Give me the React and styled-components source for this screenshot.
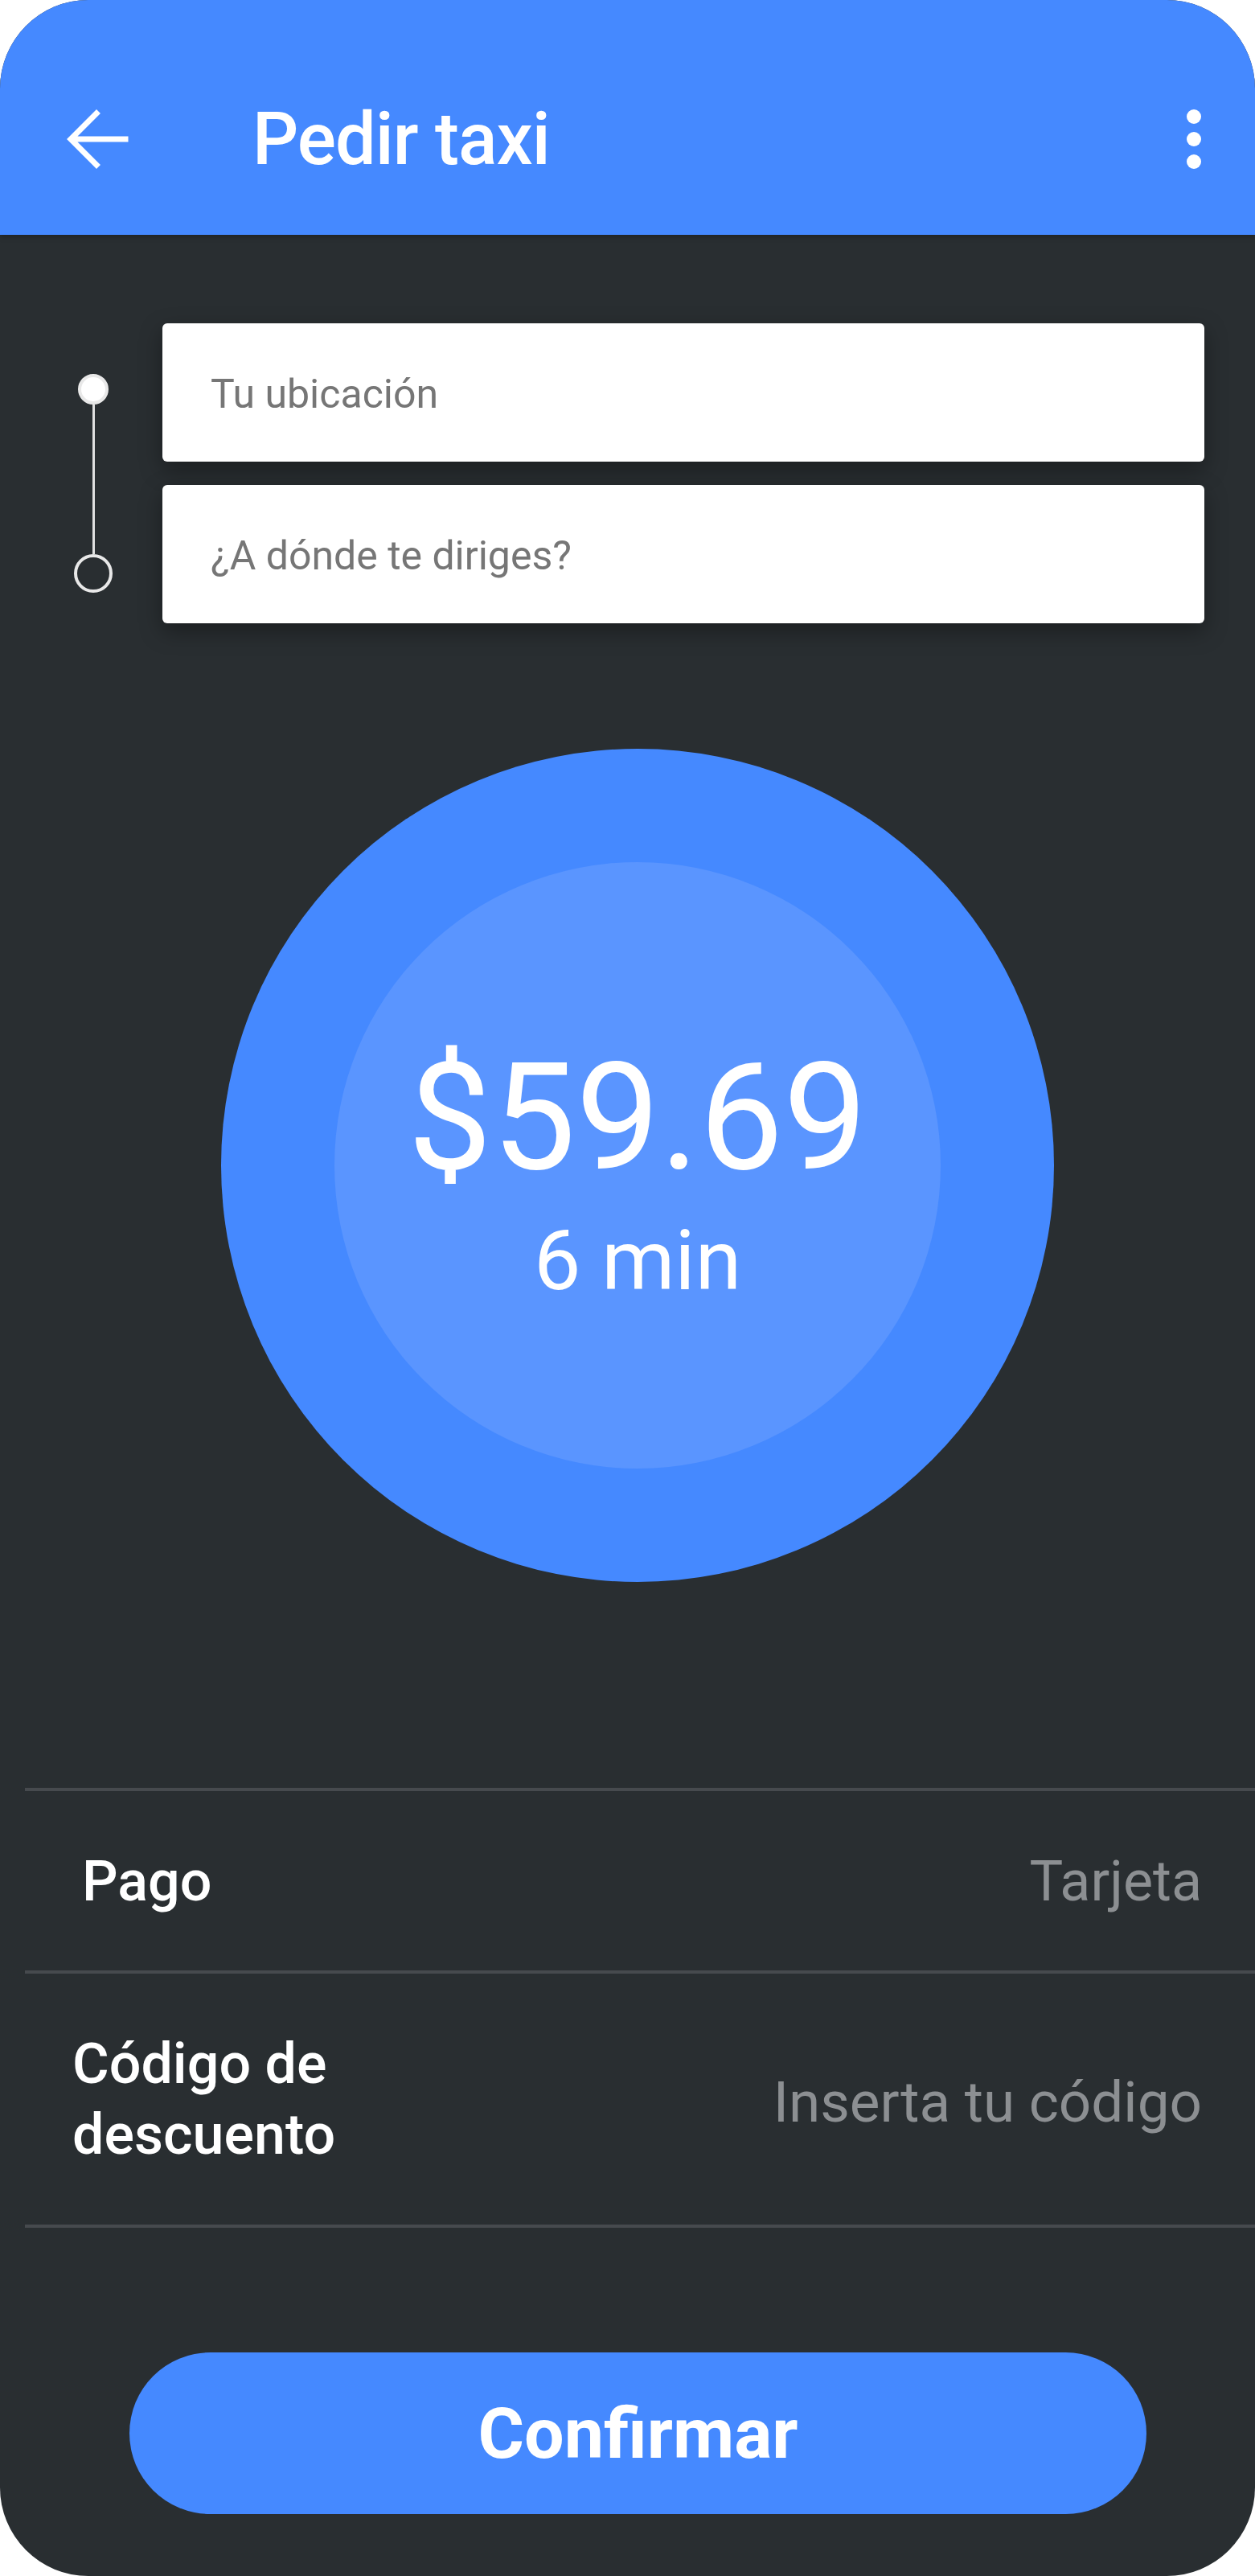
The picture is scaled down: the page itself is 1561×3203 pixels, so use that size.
import React from 'react'
import styled, { createGlobalStyle } from 'styled-components'

const Global = createGlobalStyle`
    html, body {
        margin: 0;
        padding: 0;
        background: #ffffff;
    }
    * {
        box-sizing: border-box;
    }
`;

const Phone = styled.div`
    width: 1561px;
    height: 3203px;
    display: flex;
    flex-direction: column;

    background-color: #292e31;
    border-radius: 110px;
    overflow: hidden;

    font-family: Roboto, "Liberation Sans", sans-serif;
`;

const Header = styled.header`
    height: 292px;
    flex-shrink: 0;
    display: flex;
    align-items: center;
    padding: 54px 66px 0 82px;

    background-color: #4589ff;
    box-shadow: 0 3px 6px rgba(0, 0, 0, 0.25);
`;

const Title = styled.h1`
    flex: 1;
    margin: 0 0 0 154px;

    color: #ffffff;
    font-size: 90px;
    font-weight: 500;
    letter-spacing: -1px;
`;

const Route = styled.div`
    display: flex;
    margin-top: 110px;
    padding-right: 63px;
`;

const Timeline = styled.div`
    width: 202px;
    flex-shrink: 0;
    display: flex;
    flex-direction: column;
    align-items: center;
    padding-top: 63px;
    padding-left: 30px;
`;

const Dot = styled.div`
    width: ${p => p.filled ? '38px' : '48px'};
    height: ${p => p.filled ? '38px' : '48px'};
    border-radius: 50%;
    flex-shrink: 0;
    border: 4px solid #e8e8e8;
    background-color: ${p => p.filled ? '#ffffff' : 'transparent'};
`;

const Stem = styled.div`
    width: 3px;
    height: 186px;
    background-color: #e0e0e0;
`;

const Fields = styled.div`
    flex: 1;
    display: flex;
    flex-direction: column;
    gap: 29px;
`;

const Field = styled.div`
    height: 172px;
    display: flex;
    align-items: center;
    padding: 4px 0 0 60px;

    background-color: #ffffff;
    border-radius: 6px;
    box-shadow: 0 10px 28px rgba(0, 0, 0, 0.35);

    color: #767676;
    font-size: 50px;
`;

const Estimate = styled.div`
    display: flex;
    justify-content: center;
    margin-top: 156px;
    padding-left: 25px;
`;

const Outer = styled.div`
    width: 1036px;
    height: 1036px;
    border-radius: 50%;
    display: flex;
    align-items: center;
    justify-content: center;
    background-color: #4589ff;
`;

const Inner = styled.div`
    width: 754px;
    height: 754px;
    border-radius: 50%;
    display: flex;
    flex-direction: column;
    align-items: center;
    justify-content: center;
    padding-top: 18px;

    background-color: #5a95ff;
    color: #ffffff;
`;

const Price = styled.div`
    font-size: 186px;
    line-height: 1;
    font-weight: 400;
`;

const Eta = styled.div`
    margin-top: 34px;
    font-size: 104px;
    line-height: 1;
    font-weight: 400;
`;

const Options = styled.div`
    margin-top: 256px;
    margin-left: 31px;
    border-top: 4px solid #464a4e;
`;

const Option = styled.div`
    height: ${p => p.tall ? '316px' : '227px'};
    display: flex;
    align-items: center;
    justify-content: space-between;
    padding: 0 66px 0 ${p => p.tall ? '59px' : '71px'};

    border-bottom: 4px solid #464a4e;
`;

const Label = styled.div`
    color: #ffffff;
    font-size: 70px;
    font-weight: 500;
    line-height: 88px;
`;

const Value = styled.div`
    color: #8c8f92;
    font-size: ${p => p.tall ? '71px' : '70px'};
    padding-top: ${p => p.tall ? '6px' : '0'};
`;

const Footer = styled.div`
    flex: 1;
    display: flex;
    align-items: flex-start;
    justify-content: center;
    padding-top: 155px;
    padding-left: 26px;
`;

const Confirm = styled.button`
    width: 1265px;
    height: 201px;
    border: none;
    border-radius: 101px;

    background-color: #4589ff;
    color: #ffffff;
    font-family: Roboto, "Liberation Sans", sans-serif;
    font-size: 88px;
    font-weight: 700;
`;

const BackIcon = () => (
    <svg width="78" height="76" viewBox="0 0 78 76">
        <path d="M74 38H8M38 6L6 38l32 32" fill="none" stroke="#ffffff" strokeWidth="7" strokeLinecap="square"/>
    </svg>
);

const MoreIcon = () => (
    <svg width="20" height="76" viewBox="0 0 20 76">
        <circle cx="10" cy="10" r="9" fill="#ffffff"/>
        <circle cx="10" cy="38" r="9" fill="#ffffff"/>
        <circle cx="10" cy="66" r="9" fill="#ffffff"/>
    </svg>
);

const App = () => (
    <Phone>
        <Global/>
        <Header>
            <BackIcon/>
            <Title>Pedir taxi</Title>
            <MoreIcon/>
        </Header>
        <Route>
            <Timeline>
                <Dot filled/>
                <Stem/>
                <Dot/>
            </Timeline>
            <Fields>
                <Field>Tu ubicación</Field>
                <Field>¿A dónde te diriges?</Field>
            </Fields>
        </Route>
        <Estimate>
            <Outer>
                <Inner>
                    <Price>$59.69</Price>
                    <Eta>6 min</Eta>
                </Inner>
            </Outer>
        </Estimate>
        <Options>
            <Option>
                <Label>Pago</Label>
                <Value>Tarjeta</Value>
            </Option>
            <Option tall>
                <Label>Código de<br/>descuento</Label>
                <Value tall>Inserta tu código</Value>
            </Option>
        </Options>
        <Footer>
            <Confirm>Confirmar</Confirm>
        </Footer>
    </Phone>
);

export default App
